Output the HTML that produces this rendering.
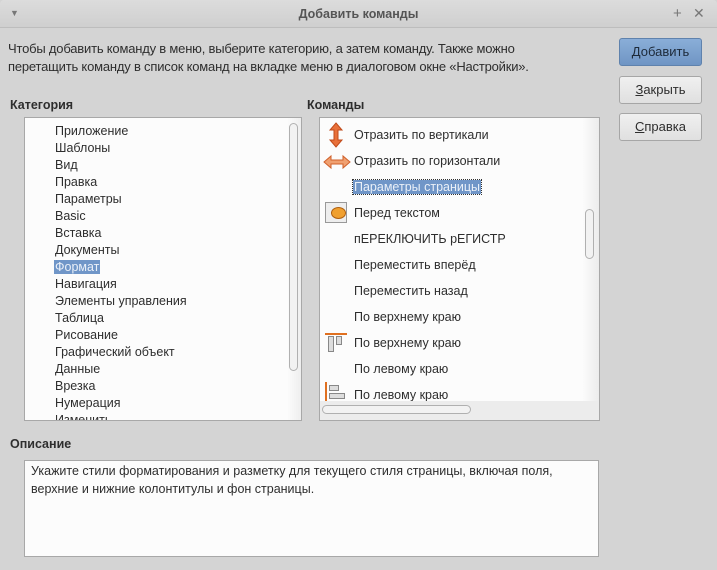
<!DOCTYPE html>
<html><head><meta charset="utf-8"><style>
*{margin:0;padding:0;box-sizing:border-box}
body{width:717px;height:570px;background:#d4d4d4;font-family:"Liberation Sans","DejaVu Sans",sans-serif;font-size:13px;color:#2e2e2e;position:relative;overflow:hidden}
.abs{position:absolute;white-space:nowrap}
.title{position:absolute;left:0;top:0;width:717px;height:28px;background:linear-gradient(#dcdcdc,#cfcfcf);border-bottom:1px solid #bdbdbd;border-radius:4px 4px 0 0}
.box{position:absolute;background:#fcfcfc;border:1px solid #a8a8a8}
.btn{position:absolute;left:619px;width:83px;height:28px;border:1px solid #a6a6a6;border-radius:3px;background:linear-gradient(#f0f0f0,#e0e0e0);text-align:center;line-height:26px;font-size:13px}
.b{font-weight:bold}
.ci{position:absolute;left:30px;font-size:12.5px}
.cm{position:absolute;left:34px;font-size:12.5px}
</style></head><body>
<div class="title"></div>
<div class="abs" style="left:10px;top:8px;font-size:9px;color:#777">▼</div>
<div class="abs b" style="left:0;width:717px;text-align:center;top:7px;color:#555;font-size:12.5px">Добавить команды</div>
<div class="abs" style="left:673px;top:5px;color:#777;font-size:15px">+</div>
<div class="abs" style="left:693px;top:5px;color:#777;font-size:14px">✕</div>
<div class="abs" style="left:8px;top:41px;font-size:13px;letter-spacing:-0.2px">Чтобы добавить команду в меню, выберите категорию, а затем команду. Также можно</div>
<div class="abs" style="left:8px;top:59px;font-size:13px;letter-spacing:-0.2px">перетащить команду в список команд на вкладке меню в диалоговом окне «Настройки».</div>
<div class="btn" style="top:38px;background:linear-gradient(#8aaed8,#6f95c4);border-color:#5f82ad;color:#1d2a3a"><u>Д</u>обавить</div>
<div class="btn" style="top:76px"><u>З</u>акрыть</div>
<div class="btn" style="top:113px"><u>С</u>правка</div>
<div class="abs b" style="left:10px;top:98px;font-size:12.5px">Категория</div>
<div class="abs b" style="left:307px;top:98px;font-size:12.5px">Команды</div>
<div class="box" style="left:24px;top:117px;width:278px;height:304px;overflow:hidden">
<div class="ci" style="top:6px">Приложение</div>
<div class="ci" style="top:23px">Шаблоны</div>
<div class="ci" style="top:40px">Вид</div>
<div class="ci" style="top:57px">Правка</div>
<div class="ci" style="top:74px">Параметры</div>
<div class="ci" style="top:91px">Basic</div>
<div class="ci" style="top:108px">Вставка</div>
<div class="ci" style="top:125px">Документы</div>
<div class="ci" style="top:142px;background:#7096c8;color:#eaf0f8;padding:0 1px;left:29px">Формат</div>
<div class="ci" style="top:159px">Навигация</div>
<div class="ci" style="top:176px">Элементы управления</div>
<div class="ci" style="top:193px">Таблица</div>
<div class="ci" style="top:210px">Рисование</div>
<div class="ci" style="top:227px">Графический объект</div>
<div class="ci" style="top:244px">Данные</div>
<div class="ci" style="top:261px">Врезка</div>
<div class="ci" style="top:278px">Нумерация</div>
<div class="ci" style="top:295px">Изменить</div>
<div style="position:absolute;left:262px;top:0;width:16px;height:304px;background:linear-gradient(90deg,#fcfcfc,#ececec)"></div>
<div style="position:absolute;left:264px;top:5px;width:9px;height:248px;border:1px solid #b0b0b0;border-radius:5px;background:#f2f2f2"></div>
</div>
<div class="box" style="left:319px;top:117px;width:281px;height:304px;overflow:hidden">
<svg style="position:absolute;left:8px;top:4px" width="16" height="26" viewBox="0 0 16 26"><path d="M8 1 L14 8 H10 V18 H14 L8 25 L2 18 H6 V8 H2 Z" fill="#e8703a" stroke="#c04a1a"/></svg>
<div class="cm" style="top:10px">Отразить по вертикали</div>
<svg style="position:absolute;left:3px;top:36px" width="28" height="16" viewBox="0 0 28 16"><path d="M1 8 L8 2 V6 H20 V2 L27 8 L20 14 V10 H8 V14 Z" fill="#f0a070" stroke="#d0602a"/></svg>
<div class="cm" style="top:36px">Отразить по горизонтали</div>
<div class="cm" style="top:62px;background:#7096c8;color:#eaf0f8;outline:1px dotted #333;padding:0 1px;left:33px">Параметры страницы</div>
<div style="position:absolute;left:5px;top:84px;width:22px;height:21px;border:1px solid #999;background:#eee"></div>
<div style="position:absolute;left:11px;top:89px;width:15px;height:12px;border-radius:50%;background:#f0a030;border:1px solid #b06010"></div>
<div class="cm" style="top:88px">Перед текстом</div>
<div class="cm" style="top:114px">пЕРЕКЛЮЧИТЬ рЕГИСТР</div>
<div class="cm" style="top:140px">Переместить вперёд</div>
<div class="cm" style="top:166px">Переместить назад</div>
<div class="cm" style="top:192px">По верхнему краю</div>
<div style="position:absolute;left:5px;top:215px;width:22px;height:2px;background:#e07020"></div>
<div style="position:absolute;left:8px;top:218px;width:6px;height:16px;border:1px solid #888;background:#ddd"></div>
<div style="position:absolute;left:16px;top:218px;width:6px;height:9px;border:1px solid #888;background:#ddd"></div>
<div class="cm" style="top:218px">По верхнему краю</div>
<div class="cm" style="top:244px">По левому краю</div>
<div style="position:absolute;left:5px;top:264px;width:2px;height:20px;background:#e07020"></div>
<div style="position:absolute;left:9px;top:267px;width:10px;height:6px;border:1px solid #888;background:#ddd"></div>
<div style="position:absolute;left:9px;top:275px;width:16px;height:6px;border:1px solid #888;background:#ddd"></div>
<div class="cm" style="top:270px">По левому краю</div>
<div style="position:absolute;left:0;top:283px;width:281px;height:21px;background:#ececec"></div>
<div style="position:absolute;left:2px;top:287px;width:149px;height:9px;border:1px solid #b0b0b0;border-radius:5px;background:#f2f2f2"></div>
<div style="position:absolute;left:262px;top:0;width:17px;height:283px;background:linear-gradient(90deg,#fcfcfc,#ececec)"></div>
<div style="position:absolute;left:265px;top:91px;width:9px;height:50px;border:1px solid #b0b0b0;border-radius:5px;background:#f2f2f2"></div>
</div>
<div class="abs b" style="left:10px;top:437px;font-size:12.5px">Описание</div>
<div class="box" style="left:24px;top:460px;width:575px;height:97px">
<div class="abs" style="left:6px;top:3px;font-size:12.5px">Укажите стили форматирования и разметку для текущего стиля страницы, включая поля,</div>
<div class="abs" style="left:6px;top:21px;font-size:12.5px">верхние и нижние колонтитулы и фон страницы.</div>
</div>
</body></html>
